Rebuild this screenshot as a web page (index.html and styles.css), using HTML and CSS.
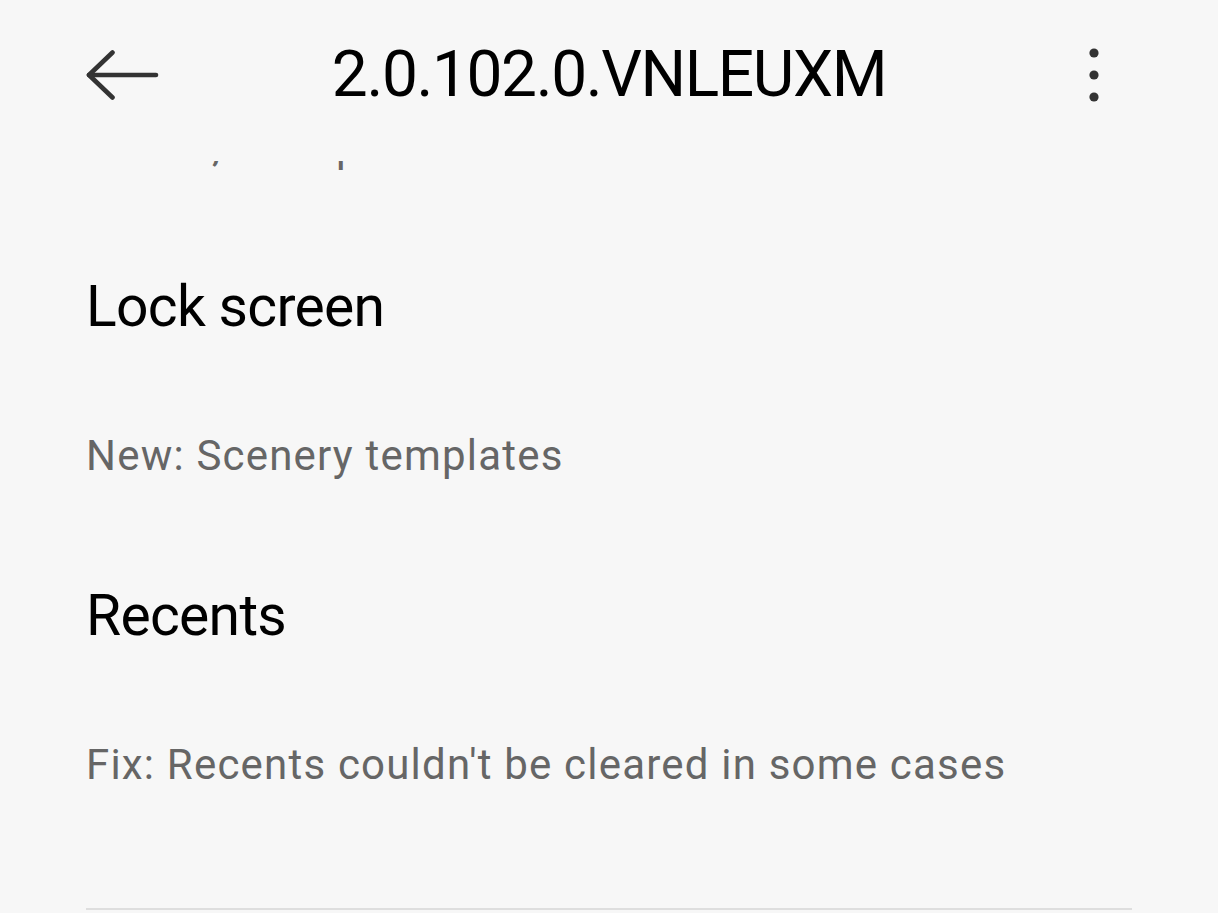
FILE: index.html
```html
<!DOCTYPE html>
<html lang="en">
<head>
<meta charset="utf-8">
<title>2.0.102.0.VNLEUXM</title>
<link rel="stylesheet" href="styles.css">
</head>
<body>
<div class="screen">
  <header class="topbar">
    <button class="icon-btn back" aria-label="Back">
      <svg width="73" height="50" viewBox="0 0 73 50" fill="none" stroke="#333" stroke-width="4.6" stroke-linecap="round" stroke-linejoin="round">
        <path d="M3 25 H70"/>
        <path d="M26.5 2.5 L3 25 L26.5 47.5"/>
      </svg>
    </button>
    <h1 class="title">2.0.102.0.VNLEUXM</h1>
    <button class="icon-btn more" aria-label="More">
      <svg width="12" height="56" viewBox="0 0 12 56" fill="#333">
        <circle cx="6" cy="6" r="4.6"/>
        <circle cx="6" cy="28" r="4.6"/>
        <circle cx="6" cy="50" r="4.6"/>
      </svg>
    </button>
  </header>
  <main class="content">
    <div class="notes">
      <p class="desc clipped">Fix: UI, save presets</p>
      <section class="note">
        <h2 class="note-title">Lock screen</h2>
        <p class="desc">New: Scenery templates</p>
      </section>
      <section class="note">
        <h2 class="note-title">Recents</h2>
        <p class="desc">Fix: Recents couldn't be cleared in some cases</p>
      </section>
      <div class="divider"></div>
    </div>
  </main>
</div>
</body>
</html>
```

FILE: styles.css
```css
html, body {
  margin: 0;
  padding: 0;
  background: #f7f7f7;
}

body {
  font-family: Roboto, "Noto Sans", Arial, sans-serif;
  color: #000;
  width: 1218px;
  height: 913px;
  overflow: hidden;
}

.screen {
  display: flex;
  flex-direction: column;
  height: 913px;
}

.topbar {
  display: grid;
  grid-template-columns: 1fr auto 1fr;
  align-items: center;
  height: 150px;
  padding-bottom: 11px;
  flex: none;
}

.icon-btn {
  background: none;
  border: 0;
  padding: 0;
  margin: 0;
  display: flex;
  align-items: center;
  justify-content: center;
}

.back {
  justify-self: start;
  margin-left: 86px;
}

.more {
  justify-self: end;
  margin-right: 118px;
}

.title {
  margin: 0;
  font-size: 64px;
  font-weight: 400;
  letter-spacing: -1.4px;
  line-height: 80px;
  color: #000;
  white-space: nowrap;
}

.content {
  flex: 1;
  overflow: hidden;
}

.notes {
  margin: -44px 86px 0 86px;
}

.note {
  margin-top: 90px;
}

.note-title {
  margin: 0 0 79px 0;
  font-size: 57px;
  line-height: 80px;
  font-weight: 400;
  letter-spacing: -0.7px;
  color: #000;
}

.desc {
  margin: 0;
  font-size: 42px;
  line-height: 60px;
  letter-spacing: 1.2px;
  color: #666;
  white-space: nowrap;
}

.clipped {
  padding-left: 4px;
}

.divider {
  margin-top: 113px;
  height: 2px;
  width: 1046px;
  background: #dedede;
}
```
